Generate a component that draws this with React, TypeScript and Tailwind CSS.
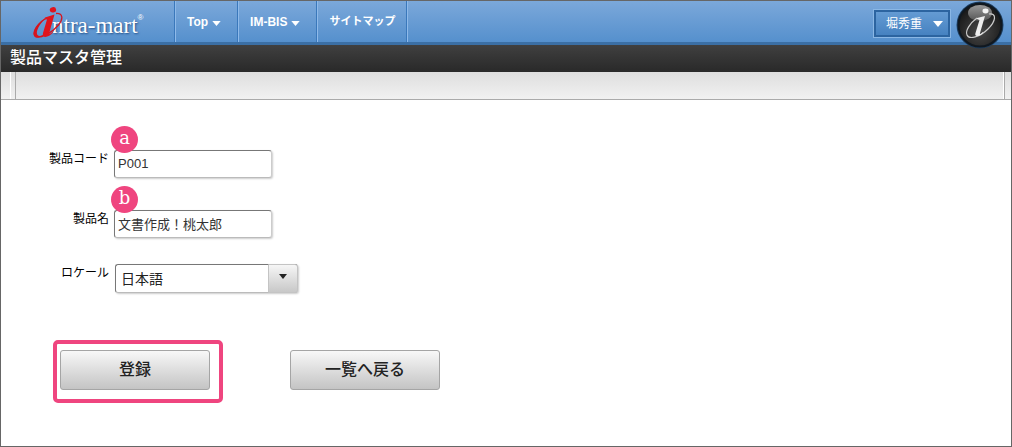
import { useState } from "react";
import type { ReactNode } from "react";

type NavItem = {
  label: string;
  hasMenu: boolean;
};

const navItems: NavItem[] = [
  { label: "Top", hasMenu: true },
  { label: "IM-BIS", hasMenu: true },
  { label: "サイトマップ", hasMenu: false },
];

const Caret = ({ className }: { className: string }) => (
  <svg viewBox="0 0 10 6" className={className} aria-hidden="true">
    <path d="M0 0h10L5 6z" fill="currentColor" />
  </svg>
);

const Logo = () => (
  <a href="#top" aria-label="intra-mart" className="relative flex h-full w-[173px] items-center pl-[51px] text-white">
    <span className="pt-2 font-['Liberation_Serif',serif] text-[23px] leading-7 [text-shadow:1px_1px_2px_#24528a]">
      ntra-mart
    </span>
    <span className="-mt-2 text-[8px] leading-3">®</span>
    <svg viewBox="0 0 34 34" className="absolute top-1 left-[31px] h-[34px] w-[34px]" aria-hidden="true">
      <path
        d="M24 8.500C31 8 31.500 14 26.500 20C20 28 8 34 3.500 31.500C-1 28 6 17 15 13"
        fill="none"
        stroke="#d7141d"
        strokeWidth="1.300"
      />
      <path d="M3 32C-1 29 5 18 14 13C8 18 3 27 5.500 30C7 32 11 30.500 14 29C10 32 5 33.500 3 32Z" fill="#d7141d" />
      <ellipse cx="21" cy="4.800" rx="3.200" ry="2.700" fill="#e0141d" transform="rotate(-12 21 5)" />
      <path
        d="M13 12.500L22.500 9.500L17.500 27C17 29.500 18.500 29 20.500 26.500L21 27.500C17 32.500 9.500 34 11 28L15 14.500L12.500 14Z"
        fill="#e0141d"
      />
    </svg>
  </a>
);

const ProductMark = () => (
  <svg viewBox="0 0 48 48" className="h-12 w-12 shrink-0" aria-hidden="true">
    <defs>
      <radialGradient id="markBody" cx="50%" cy="65%" r="60%">
        <stop offset="0" stopColor="#484848" />
        <stop offset="1" stopColor="#181818" />
      </radialGradient>
      <linearGradient id="markShine" x1="0" y1="0" x2="0" y2="1">
        <stop offset="0" stopColor="#999" />
        <stop offset="1" stopColor="#555" />
      </linearGradient>
    </defs>
    <circle cx="24" cy="24" r="23.500" fill="#1c3d5f" />
    <circle cx="24" cy="24" r="21.500" fill="url(#markBody)" stroke="#101820" strokeWidth="2" />
    <ellipse cx="24" cy="12" rx="12" ry="8" fill="url(#markShine)" />
    <path
      d="M33 13C41 12 40 20 32 28C24 36 13 39 11 34C9 30 14 22 21 17"
      fill="none"
      stroke="#ccc"
      strokeWidth="1.200"
    />
    <ellipse cx="29.500" cy="10" rx="3" ry="2.400" fill="#f4f4f4" />
    <path d="M21 17L29 15L24 32C23.500 34 25 33 27 31L27 32C23 36 18 36 19.500 32L23.500 19L21 18Z" fill="#eee" />
  </svg>
);

const Badge = ({ children }: { children: ReactNode }) => (
  <span className="pointer-events-none absolute -top-6 -left-[3px] flex h-[27px] w-[27px] items-center justify-center rounded-full bg-[#ef457f] pb-1 font-['DejaVu_Serif',serif] text-lg leading-6 text-white">
    {children}
  </span>
);

const labelClass = "w-[100px] pr-px text-right text-xs leading-[18px]";

const inputClass =
  "h-7 w-[158px] rounded-[3px] border border-t-[#777] border-r-[#ccc] border-b-[#bbb] border-l-[#777] bg-white px-[3px] pb-[2px] text-[13px] text-[#333] shadow-[1px_1px_2px_#ccc] outline-none";

const buttonClass =
  "h-10 w-[150px] rounded-[3px] border border-[#a5a5a5] bg-linear-to-b from-[#f8f8f8] to-[#c4c4c4] text-base font-medium text-[#222]";

export default function App() {
  const [code, setCode] = useState("P001");
  const [name, setName] = useState("文書作成！桃太郎");
  const [locale, setLocale] = useState("ja");

  return (
    <div className="min-h-screen border border-[#666] bg-white font-['Liberation_Sans','Noto_Sans_CJK_JP',sans-serif] text-black">
      <header className="flex h-11 items-stretch border-b-3 border-[#3b6fa5] bg-linear-to-b from-[#7ba8da] to-[#5590cd]">
        <Logo />
        <nav className="flex border-r border-l border-r-[#8fbae9] border-l-[#3a78bb]">
          {navItems.map((item) => (
            <a
              key={item.label}
              href="#top"
              className={`flex items-center gap-1 border-r border-l border-r-[#3a78bb] border-l-[#8fbae9] pl-[11px] font-bold text-white ${
                item.hasMenu ? "pr-4 text-xs" : "pr-[11px] text-[11px]"
              }`}
            >
              {item.label}
              {item.hasMenu && <Caret className="mt-1 h-[5px] w-[9px]" />}
            </a>
          ))}
        </nav>
        <div className="ml-auto flex items-start gap-[6px] pr-[7px]">
          <button
            type="button"
            className="mt-[9px] flex h-[27px] w-[76px] items-center justify-between border-2 border-[#2c64a0] bg-linear-to-b from-[#649bd3] to-[#4682c1] pr-[5px] pl-[10px] text-xs text-white shadow-[0_0_0_1px_#8ab7e5]"
          >
            堀秀重
            <Caret className="h-[6px] w-[10px]" />
          </button>
          <ProductMark />
        </div>
      </header>

      <div className="h-[27px] bg-linear-to-b from-[#404040] to-[#292929] px-[9px]">
        <h1 className="text-base leading-[26px] font-medium text-white">製品マスタ管理</h1>
      </div>

      <div className="flex h-7 border-b border-[#aaa] bg-linear-to-b from-[#dedede] to-[#f1f1f1] pr-[6px] pl-[9px]">
        <div className="flex-1 border-r border-l border-r-[#aaa] border-l-white pl-1">
          <div className="h-full border-r border-l border-r-white border-l-[#aaa]" />
        </div>
      </div>

      <form onSubmit={(event) => event.preventDefault()} className="pt-[50px] pb-10">
        <div className="flex h-[60px] items-start gap-1 pl-[9px]">
          <label htmlFor="code" className={labelClass}>
            製品コード
          </label>
          <div className="relative">
            <input id="code" value={code} onChange={(event) => setCode(event.target.value)} className={inputClass} />
            <Badge>a</Badge>
          </div>
        </div>
        <div className="flex h-[54px] items-start gap-1 pl-[9px]">
          <label htmlFor="name" className={labelClass}>
            製品名
          </label>
          <div className="relative">
            <input id="name" value={name} onChange={(event) => setName(event.target.value)} className={inputClass} />
            <Badge>b</Badge>
          </div>
        </div>
        <div className="flex items-start gap-[5px] pl-[9px]">
          <label htmlFor="locale" className={labelClass}>
            ロケール
          </label>
          <div className="relative">
            <select
              id="locale"
              value={locale}
              onChange={(event) => setLocale(event.target.value)}
              className="h-[29px] w-[183px] appearance-none rounded-[3px] border border-t-[#777] border-r-[#ccc] border-b-[#bbb] border-l-[#777] bg-white px-[5px] text-sm text-[#222] shadow-[1px_1px_2px_#ccc] outline-none"
            >
              <option value="ja">日本語</option>
              <option value="en">英語</option>
            </select>
            <span className="pointer-events-none absolute top-0 right-0 flex h-[29px] w-[30px] items-center justify-center rounded-r-[3px] border border-[#c4c4c4] bg-linear-to-b from-[#f6f6f6] to-[#c8c8c8] pb-1 text-[#222]">
              <Caret className="h-[5px] w-2" />
            </span>
          </div>
        </div>

        <div className="mt-[47px] flex items-start gap-[67px] pl-[52px]">
          <div className="rounded-[5px] border-4 border-[#ef457f] pt-[6px] pr-[9px] pb-[9px] pl-[3px]">
            <button type="submit" className={buttonClass}>
              登録
            </button>
          </div>
          <div className="pt-[10px]">
            <button type="button" className={buttonClass}>
              一覧へ戻る
            </button>
          </div>
        </div>
      </form>
    </div>
  );
}
